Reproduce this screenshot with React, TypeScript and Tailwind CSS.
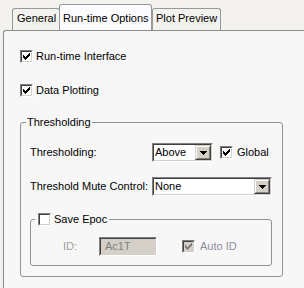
import React from "react";

const CHECK_PIXELS: [number, number][] = [
  [6, 0],
  [5, 1], [6, 1],
  [0, 2], [4, 2], [5, 2], [6, 2],
  [0, 3], [1, 3], [3, 3], [4, 3], [5, 3],
  [0, 4], [1, 4], [2, 4], [3, 4], [4, 4],
  [1, 5], [2, 5], [3, 5],
  [2, 6],
];

function Check({ checked, disabled }: { checked?: boolean; disabled?: boolean }) {
  return (
    <span className="inline-flex w-[13px] h-[13px] shrink-0 border border-t-[#808080] border-l-[#808080] border-r-white border-b-white">
      <span
        className={`flex items-center justify-center w-full h-full border border-t-[#404040] border-l-[#404040] border-r-[#d4d0c8] border-b-[#d4d0c8] ${
          disabled ? "bg-[#d4d0c8]" : "bg-white"
        }`}
      >
        {checked && (
          <svg width="7" height="7" viewBox="0 0 7 7" shapeRendering="crispEdges">
            {CHECK_PIXELS.map(([x, y]) => (
              <rect key={`${x}-${y}`} x={x} y={y} width="1" height="1" fill={disabled ? "#808080" : "#000"} />
            ))}
          </svg>
        )}
      </span>
    </span>
  );
}

function Select({ value, width }: { value: string; width: string }) {
  return (
    <span className={`inline-flex ${width} h-[19px] shrink-0 border border-t-[#808080] border-l-[#808080] border-r-white border-b-white`}>
      <span className="flex w-full h-full border border-t-[#404040] border-l-[#404040] border-r-[#d4d0c8] border-b-[#d4d0c8] bg-white">
        <span className="flex-1 pl-[1px] leading-[15px] text-black">{value}</span>
        <span className="flex w-[16px] h-full border border-t-[#d4d0c8] border-l-[#d4d0c8] border-r-[#404040] border-b-[#404040]">
          <span className="flex items-center justify-center w-full h-full border border-t-white border-l-white border-r-[#808080] border-b-[#808080] bg-[#d4d0c8]">
            <svg width="7" height="4" viewBox="0 0 7 4" shapeRendering="crispEdges">
              <rect x="0" y="0" width="7" height="1" fill="#000" />
              <rect x="1" y="1" width="5" height="1" fill="#000" />
              <rect x="2" y="2" width="3" height="1" fill="#000" />
              <rect x="3" y="3" width="1" height="1" fill="#000" />
            </svg>
          </span>
        </span>
      </span>
    </span>
  );
}

export default function App() {
  return (
    <div className="w-[304px] h-[288px] overflow-hidden bg-[#f4f2ee] font-['Liberation_Sans',Arial,sans-serif] text-[11px] leading-[13px] text-black">
      {/* Tabs */}
      <div className="flex items-end h-[30px] pl-[12px]">
        <div className="w-[48px] h-[22px] pt-[3px] pl-[4px] border border-b-0 border-[#919b9c] rounded-t-[3px] bg-[#f4f2ee]">
          General
        </div>
        <div className="relative z-10 -ml-[1px] w-[93px] h-[26px] pt-[7px] pl-[3px] border border-b-0 border-[#919b9c] rounded-t-[3px] bg-[#fcfcfe]">
          Run-time Options
        </div>
        <div className="w-[69px] h-[22px] pt-[3px] pl-[3px] border border-b-0 border-[#919b9c] rounded-t-[3px] bg-[#f4f2ee]">
          Plot Preview
        </div>
      </div>

      {/* Panel */}
      <div className="ml-[3px] h-[258px] border-l border-t border-[#8d8d8d] rounded-tl-[3px] bg-[#f7f7f7] pt-[19px] pl-[16px]">
        <div className="flex items-center gap-[3px] h-[13px]">
          <Check checked />
          <span>Run-time Interface</span>
        </div>
        <div className="flex items-center gap-[3px] h-[13px] mt-[21px]">
          <Check checked />
          <span>Data Plotting</span>
        </div>

        <fieldset className="mt-[19px] w-[263px] border border-[#919191] rounded-[3px] p-0 pb-[10px]">
          <legend className="ml-[5px] px-[1px] leading-[13px]">Thresholding</legend>

          <div className="flex items-center mt-[14px] pl-[9px] h-[19px]">
            <span className="w-[122px]">Thresholding:</span>
            <Select value="Above" width="w-[61px]" />
            <span className="ml-[7px]">
              <Check checked />
            </span>
            <span className="ml-[4px]">Global</span>
          </div>

          <div className="flex items-center mt-[15px] pl-[9px] h-[19px]">
            <span className="w-[122px]">Threshold Mute Control:</span>
            <Select value="None" width="w-[120px]" />
          </div>

          <fieldset className="mt-[17px] ml-[9px] mr-[10px] border border-[#919191] rounded-[3px] p-0 pb-[9px]">
            <legend className="ml-[4px] pl-[3px] pr-[2px] h-[13px] flex items-center gap-[3px]">
              <Check />
              <span>Save Epoc</span>
            </legend>
            <div className="flex items-center mt-[11px] pl-[32px] h-[19px]">
              <span className="w-[36px] text-[#a0a0a0]">ID:</span>
              <span className="inline-flex w-[58px] h-[19px] border border-t-[#808080] border-l-[#808080] border-r-white border-b-white">
                <span className="flex w-full h-full border border-t-[#404040] border-l-[#404040] border-r-[#d4d0c8] border-b-[#d4d0c8] bg-[#d4d0c8] pl-[4px] leading-[15px] text-[#808080]">
                  Ac1T
                </span>
              </span>
              <span className="ml-[25px]">
                <Check checked disabled />
              </span>
              <span className="ml-[5px] text-[#8e8e9e]">Auto ID</span>
            </div>
          </fieldset>
        </fieldset>
      </div>
    </div>
  );
}
